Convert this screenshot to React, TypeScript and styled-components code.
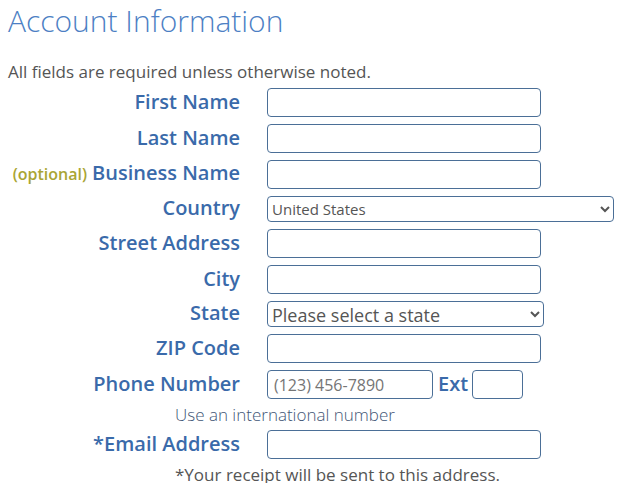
import React from 'react';
import styled, { createGlobalStyle } from 'styled-components';

const colors = {
  title: '#4d7fc4',
  label: '#3a6aaa',
  optional: '#aaa534',
  text: '#555555',
  help: '#3f5676',
  border: '#4b6f97',
};

const GlobalStyle = createGlobalStyle`
  body {
    margin: 0;
    background: #fff;
    font-family: 'Open Sans', 'Liberation Sans', sans-serif;
  }
`;

const Page = styled.div`
  padding: 0 8px;
`;

const Title = styled.h1`
  margin: 0;
  font-size: 30px;
  font-weight: 300;
  color: ${colors.title};
`;

const Note = styled.p`
  margin: 20px 0 0;
  font-size: 17px;
  line-height: 22px;
  color: ${colors.text};
`;

const Form = styled.form`
  display: flex;
  flex-direction: column;
  gap: 7px;
  margin-top: 5px;
`;

const Row = styled.div`
  display: grid;
  grid-template-columns: 232px 1fr;
  column-gap: 27px;
  align-items: center;
`;

const Label = styled.label`
  display: flex;
  justify-content: flex-end;
  align-items: baseline;
  margin-top: -2px;
  font-size: 20px;
  font-weight: 600;
  line-height: 22px;
  color: ${colors.label};
  white-space: nowrap;
`;

const Optional = styled.span`
  font-size: 16px;
  color: ${colors.optional};
  margin-right: 5px;
`;

const Input = styled.input<{ $width?: number }>`
  display: block;
  box-sizing: border-box;
  width: ${(p) => p.$width ?? 274}px;
  height: 29px;
  padding: 0 6px;
  border: 1px solid ${colors.border};
  border-radius: 4px;
  font-family: inherit;
  font-size: 16px;
  color: ${colors.text};
  background: #fff;

  ::placeholder {
    color: ${colors.text};
  }
`;

const Select = styled.select<{ $width: number; $size: number }>`
  display: block;
  box-sizing: border-box;
  width: ${(p) => p.$width}px;
  height: 26px;
  padding: 0;
  border: 1px solid ${colors.border};
  border-radius: 4px;
  font-family: inherit;
  font-size: ${(p) => p.$size}px;
  color: ${colors.text};
  background: #fff;
`;

const Inline = styled.div`
  display: flex;
  align-items: center;
`;

const ExtLabel = styled.label`
  margin: -2px 4px 0 5px;
  font-size: 20px;
  font-weight: 600;
  color: ${colors.label};
`;

const Hint = styled.div<{ $tone: 'help' | 'gray' }>`
  margin-left: 167px;
  font-size: 17px;
  line-height: 17px;
  font-weight: ${(p) => (p.$tone === 'help' ? 300 : 400)};
  color: ${(p) => (p.$tone === 'help' ? colors.help : colors.text)};
`;

const Field = ({ label, children }: { label: React.ReactNode; children: React.ReactNode }) => (
  <Row>
    <Label>{label}</Label>
    <div>{children}</div>
  </Row>
);

export default function App() {
  return (
    <Page>
      <GlobalStyle />
      <Title>Account Information</Title>
      <Note>All fields are required unless otherwise noted.</Note>
      <Form onSubmit={(e) => e.preventDefault()}>
        <Field label="First Name">
          <Input />
        </Field>
        <Field label="Last Name">
          <Input />
        </Field>
        <Field
          label={
            <>
              <Optional>(optional)</Optional>Business Name
            </>
          }
        >
          <Input />
        </Field>
        <Field label="Country">
          <Select $width={347} $size={15} defaultValue="US">
            <option value="US">United States</option>
            <option value="CA">Canada</option>
          </Select>
        </Field>
        <Field label="Street Address">
          <Input />
        </Field>
        <Field label="City">
          <Input />
        </Field>
        <Field label="State">
          <Select $width={277} $size={18} defaultValue="">
            <option value="">Please select a state</option>
          </Select>
        </Field>
        <Field label="ZIP Code">
          <Input />
        </Field>
        <Field label="Phone Number">
          <Inline>
            <Input $width={166} placeholder="(123) 456-7890" />
            <ExtLabel>Ext</ExtLabel>
            <Input $width={51} />
          </Inline>
        </Field>
        <Hint $tone="help">Use an international number</Hint>
        <Field label="*Email Address">
          <Input />
        </Field>
        <Hint $tone="gray">*Your receipt will be sent to this address.</Hint>
      </Form>
    </Page>
  );
}
